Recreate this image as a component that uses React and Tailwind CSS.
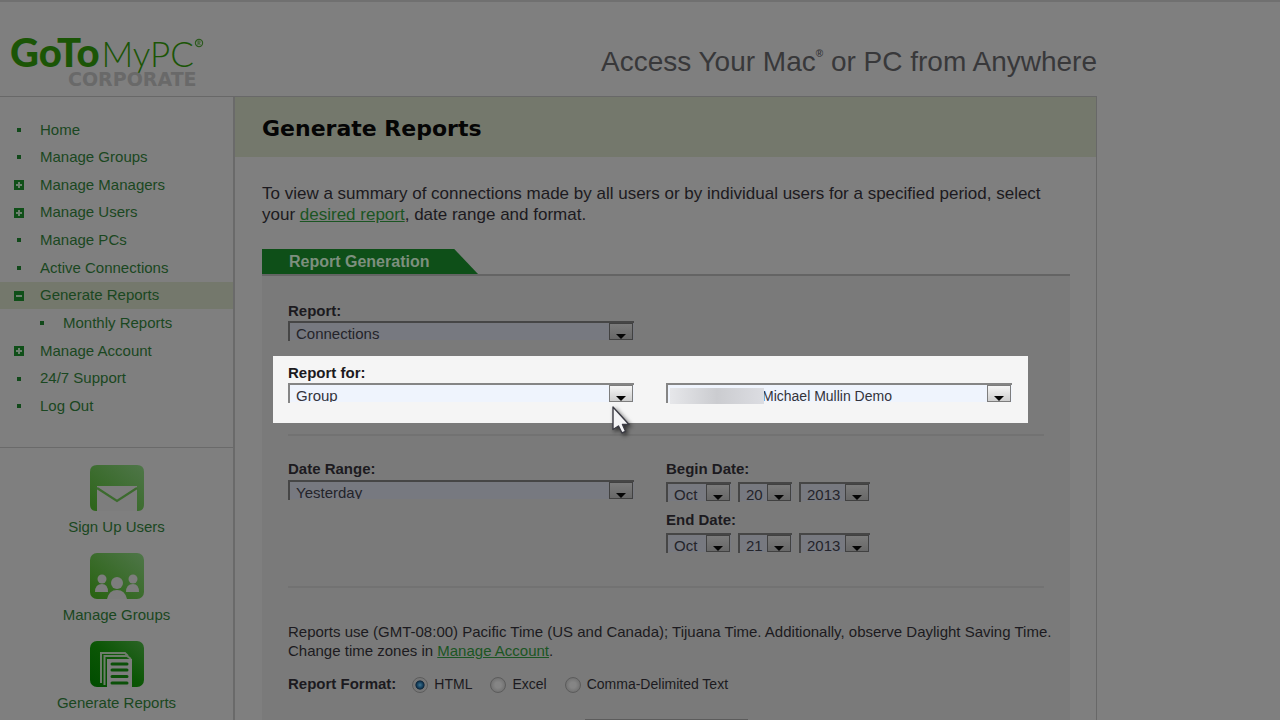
import React from "react";

const NAV = [
  { label: "Home", mark: "dot" },
  { label: "Manage Groups", mark: "dot" },
  { label: "Manage Managers", mark: "plus" },
  { label: "Manage Users", mark: "plus" },
  { label: "Manage PCs", mark: "dot" },
  { label: "Active Connections", mark: "dot" },
  { label: "Generate Reports", mark: "minus", active: true },
  { label: "Monthly Reports", mark: "dot", nested: true },
  { label: "Manage Account", mark: "plus" },
  { label: "24/7 Support", mark: "dot" },
  { label: "Log Out", mark: "dot" },
];

function Mark({ kind }) {
  if (kind === "dot") {
    return (
      <svg viewBox="0 0 10 10" className="size-2.5 shrink-0" aria-hidden="true">
        <rect x="3" y="3" width="4" height="4" fill="#11491a" />
      </svg>
    );
  }
  return (
    <svg viewBox="0 0 10 10" className="size-2.5 shrink-0" aria-hidden="true">
      <rect width="10" height="10" fill="#0f4f18" />
      <rect x="2" y="4" width="6" height="2" fill="#6d7f6f" />
      {kind === "plus" && <rect x="4" y="2" width="2" height="6" fill="#6d7f6f" />}
    </svg>
  );
}

function Logo() {
  return (
    <a href="#home" aria-label="GoToMyPC Corporate" className="flex flex-col pl-2.5">
      <span className="flex items-baseline whitespace-nowrap text-[#1b5506]">
        <span className="font-['Lato',sans-serif] text-[40px] leading-9 font-black">GoTo</span>
        <span className="ml-0.5 font-['Lato',sans-serif] text-[35px] leading-9 font-light">MyPC</span>
        <svg viewBox="0 0 10 10" className="size-2.5 translate-y-1 self-start" aria-hidden="true">
          <circle cx="5" cy="5" r="3.6" fill="none" stroke="#2c5a1d" strokeWidth="1.2" />
          <path d="M4 7V3H5.3Q6.4 3.2 6.2 4.2Q6 5.2 4 5.1M5 5.1L6.3 7" fill="none" stroke="#2c5a1d" strokeWidth="0.8" />
        </svg>
      </span>
      <span className="-mt-0.5 pl-[58px] font-['DejaVu_Sans',sans-serif] text-[19px] leading-5 font-bold text-[#696969]">
        CORPORATE
      </span>
    </a>
  );
}

function MailIcon() {
  return (
    <svg viewBox="0 0 54 46" className="h-[46px] w-[54px]" aria-hidden="true">
      <defs>
        <linearGradient id="mail" x1="0" y1="1" x2="1" y2="0">
          <stop offset="0" stopColor="#2c6418" />
          <stop offset="1" stopColor="#4f7649" />
        </linearGradient>
      </defs>
      <path d="M7 0H47Q54 0 54 7V39Q54 46 48 46H6Q0 46 0 39V7Q0 0 7 0Z" fill="url(#mail)" />
      <path d="M7 21H47V46H7Z" fill="#7d7d7d" />
      <path d="M7 23L27 36L47 23" fill="none" stroke="#3c6b2e" strokeWidth="2.2" />
    </svg>
  );
}

function GroupIcon() {
  return (
    <svg viewBox="0 0 54 46" className="h-[46px] w-[54px]" aria-hidden="true">
      <defs>
        <linearGradient id="group" x1="0" y1="1" x2="1" y2="0">
          <stop offset="0" stopColor="#27620f" />
          <stop offset="1" stopColor="#4f7649" />
        </linearGradient>
      </defs>
      <rect width="54" height="46" rx="7" fill="url(#group)" />
      <g fill="#7d7d7d">
        <circle cx="12" cy="26" r="4.5" />
        <path d="M5 39Q5 31 12 31Q18 31 18 39Z" />
        <circle cx="43" cy="26" r="4.5" />
        <path d="M36 39Q36 31 43 31Q49 31 49 39Z" />
        <path d="M17 46Q19 37 27 37Q35 37 37 46Z" />
        <circle cx="27" cy="30" r="6" />
      </g>
    </svg>
  );
}

function ReportIcon() {
  return (
    <svg viewBox="0 0 54 46" className="h-[46px] w-[54px]" aria-hidden="true">
      <defs>
        <linearGradient id="report" x1="0" y1="1" x2="1" y2="0">
          <stop offset="0" stopColor="#004c00" />
          <stop offset="0.5" stopColor="#0b5605" />
          <stop offset="1" stopColor="#2b6426" />
        </linearGradient>
      </defs>
      <rect width="54" height="46" rx="7" fill="url(#report)" />
      <path d="M11 42V12H35L38 15" fill="none" stroke="#6f7c6c" strokeWidth="2" />
      <path d="M14.5 44V15H37L41 18" fill="none" stroke="#6f7c6c" strokeWidth="2" />
      <path d="M17 18H42V46H17Z" fill="#7d7d7d" />
      <path d="M22 23H37M22 29H37M22 35.5H37M22 42H37" stroke="#0b5008" strokeWidth="3" strokeLinecap="round" />
    </svg>
  );
}

function Shortcut({ icon, label }) {
  return (
    <a href="#shortcut" className="flex h-[88px] flex-col items-center gap-1.5 text-[15px] leading-5 text-[#1a4721]">
      {icon}
      {label}
    </a>
  );
}

function Select({ id, label, value, bright, obscured, className }) {
  const frame = bright ? "border-[#858585] text-[#33333b]" : "border-[#464646] text-[#24242a]";
  const fill = bright ? "bg-[#eff4fd]" : "bg-[#777980]";
  const box = bright
    ? "border-[#7d7d7d] from-[#f6f6f6] to-[#cfcfcf]"
    : "border-[#414141] from-[#7b7b7b] to-[#686868]";
  return (
    <div className={`relative h-5 border-t-2 border-l-2 ${frame} ${className}`}>
      <div className={`h-[17px] overflow-hidden ${fill}`}>
        <select
          id={id}
          aria-label={label}
          defaultValue={value}
          className={`block h-[22px] w-full appearance-none bg-transparent pr-6 outline-none ${obscured ? "pl-[94px] text-sm" : "pl-1.5 text-[15px]"}`}
        >
          <option>{value}</option>
        </select>
      </div>
      {obscured && (
        <span className="absolute top-[3px] left-0.5 h-4 w-[94px] bg-linear-to-r from-[#e6e7ea] via-[#cbccd0] to-[#dcdde2]" />
      )}
      <span
        className={`pointer-events-none absolute top-0 right-px flex h-[17px] w-6 items-end justify-center border bg-linear-to-b ${box}`}
      >
        <svg viewBox="0 0 10 5" className="h-[5px] w-2.5" aria-hidden="true">
          <path d="M0 0H10L5 5Z" fill="#050505" />
        </svg>
      </span>
    </div>
  );
}

function DateRow({ id, label, day }) {
  return (
    <div className="flex flex-col gap-1">
      <label htmlFor={id} className="leading-[18px] font-bold">{label}</label>
      <div className="flex gap-[7px]">
        <Select id={id} value="Oct" className="w-[65px]" />
        <Select label={`${label} day`} value={day} className="w-[54px]" />
        <Select label={`${label} year`} value="2013" className="w-[71px]" />
      </div>
    </div>
  );
}

function Radio({ label, checked }) {
  return (
    <label className="flex items-center gap-1.5 text-sm">
      <input
        type="radio"
        name="format"
        defaultChecked={checked}
        className="mt-0.5 size-4 appearance-none rounded-full border border-[#5c5c5c] bg-[radial-gradient(circle,#858585_30%,#737373_70%)] checked:bg-[radial-gradient(circle_at_50%_50%,#3f7590_0,#123a58_32%,#0c2336_42%,#777777_50%)]"
      />
      {label}
    </label>
  );
}

function Cursor() {
  return (
    <svg viewBox="0 0 22 32" className="absolute top-[50px] left-[338px] h-8 w-[22px] drop-shadow-[2px_2px_2px_rgba(0,0,0,0.6)]" aria-hidden="true">
      <path
        d="M2 1V23.5L7.5 20L11 27L14.5 25.3L11.5 18.5H18Z"
        fill="#f4f4f6"
        stroke="#3b3b44"
        strokeWidth="1.4"
        strokeLinejoin="round"
      />
    </svg>
  );
}

export default function App() {
  return (
    <div className="flex min-h-screen flex-col border-t-2 border-[#707070] bg-[#7f7f7f] font-['Liberation_Sans',Arial,sans-serif] text-[15px] text-[#1c1a20]">
      <div className="flex w-full max-w-[1097px] flex-1 flex-col">
        <header className="flex h-[95px] items-start justify-between border-b border-[#686868] pt-8">
          <Logo />
          <p className="pt-3 text-[28px] leading-8 text-[#38383a]">
            Access Your Mac<sup className="-top-3.5 text-[10px] font-bold">®</sup> or PC from Anywhere
          </p>
        </header>

        <div className="flex flex-1">
          <aside className="w-[235px] shrink-0 border-r-2 border-[#6a6a6a] pt-[19px]">
            <nav>
              <ul className="grid h-[304px] grid-rows-11">
                {NAV.map((item) => (
                  <li
                    key={item.label}
                    className={`flex items-center gap-4 ${item.nested ? "pl-[37px]" : "pl-3.5"} ${item.active ? "bg-[#74786c]" : ""}`}
                  >
                    <Mark kind={item.mark} />
                    <a href="#nav" className="text-[#1a4721]">{item.label}</a>
                  </li>
                ))}
              </ul>
            </nav>
            <div className="mt-[27px] border-t border-[#6a6a6a] pt-[17px]">
              <Shortcut icon={<MailIcon />} label="Sign Up Users" />
              <Shortcut icon={<GroupIcon />} label="Manage Groups" />
              <Shortcut icon={<ReportIcon />} label="Generate Reports" />
            </div>
          </aside>

          <main className="min-w-0 flex-1 border-r border-[#686868]">
            <div className="flex h-[60px] items-center bg-[#74786c] px-[27px] pt-0.5">
              <h1 className="font-['DejaVu_Sans',sans-serif] text-[22px] font-bold text-[#050505]">Generate Reports</h1>
            </div>

            <div className="pt-[26px] pr-[26px] pl-[27px]">
              <p className="text-[17px] leading-[21px]">
                To view a summary of connections made by all users or by individual users for a specified period, select
                <br />
                your <a href="#report" className="text-[#1b5523] underline">desired report</a>, date range and format.
              </p>

              <div className="mt-6 flex border-b-2 border-[#646464]">
                <h2 className="h-[25px] w-[216px] bg-[#0e4f18] pl-[27px] text-base leading-[25px] font-bold text-[#7d8f7e] [clip-path:polygon(0_0,89%_0,100%_100%,0_100%)]">
                  Report Generation
                </h2>
              </div>

              <form className="bg-[#7a7a7a] px-[26px] pt-[26px]">
                <div className="flex flex-col gap-px">
                  <label htmlFor="report" className="leading-[18px] font-bold">Report:</label>
                  <Select id="report" value="Connections" className="w-[346px]" />
                </div>

                <div className="relative mt-[15px] mr-4 -ml-[15px] flex items-end gap-8 bg-[#f5f5f5] px-[15px] pt-2 pb-5">
                  <div className="flex flex-col gap-px">
                    <label htmlFor="scope" className="leading-[18px] font-bold">Report for:</label>
                    <Select id="scope" value="Group" bright className="w-[346px]" />
                  </div>
                  <Select label="Group name" value="Michael Mullin Demo" bright obscured className="w-[346px]" />
                  <Cursor />
                </div>

                <hr className="mt-[11px] border-t-2 border-[#727272]" />

                <div className="mt-6 flex items-start gap-8">
                  <div className="flex flex-col gap-0.5">
                    <label htmlFor="range" className="leading-[18px] font-bold">Date Range:</label>
                    <Select id="range" value="Yesterday" className="w-[346px]" />
                  </div>
                  <div className="flex flex-col gap-[9px]">
                    <DateRow id="begin" label="Begin Date:" day="20" />
                    <DateRow id="end" label="End Date:" day="21" />
                  </div>
                </div>

                <hr className="mt-[33px] border-t-2 border-[#727272]" />

                <p className="mt-[34px] leading-[19px] md:whitespace-nowrap">
                  Reports use (GMT-08:00) Pacific Time (US and Canada); Tijuana Time. Additionally, observe Daylight Saving Time.
                  <br />
                  Change time zones in <a href="#account" className="text-[#1b5523] underline">Manage Account</a>.
                </p>

                <fieldset className="mt-3.5 flex h-5 items-center">
                  <legend className="float-left mr-4 font-bold">Report Format:</legend>
                  <div className="flex gap-[18px]">
                    <Radio label="HTML" checked />
                    <Radio label="Excel" />
                    <Radio label="Comma-Delimited Text" />
                  </div>
                </fieldset>

                <div className="mt-[25px] flex justify-center">
                  <button type="button" aria-label="Generate" className="h-px w-[163px] bg-[#5c5c5c]" />
                </div>
              </form>
            </div>
          </main>
        </div>
      </div>
    </div>
  );
}
